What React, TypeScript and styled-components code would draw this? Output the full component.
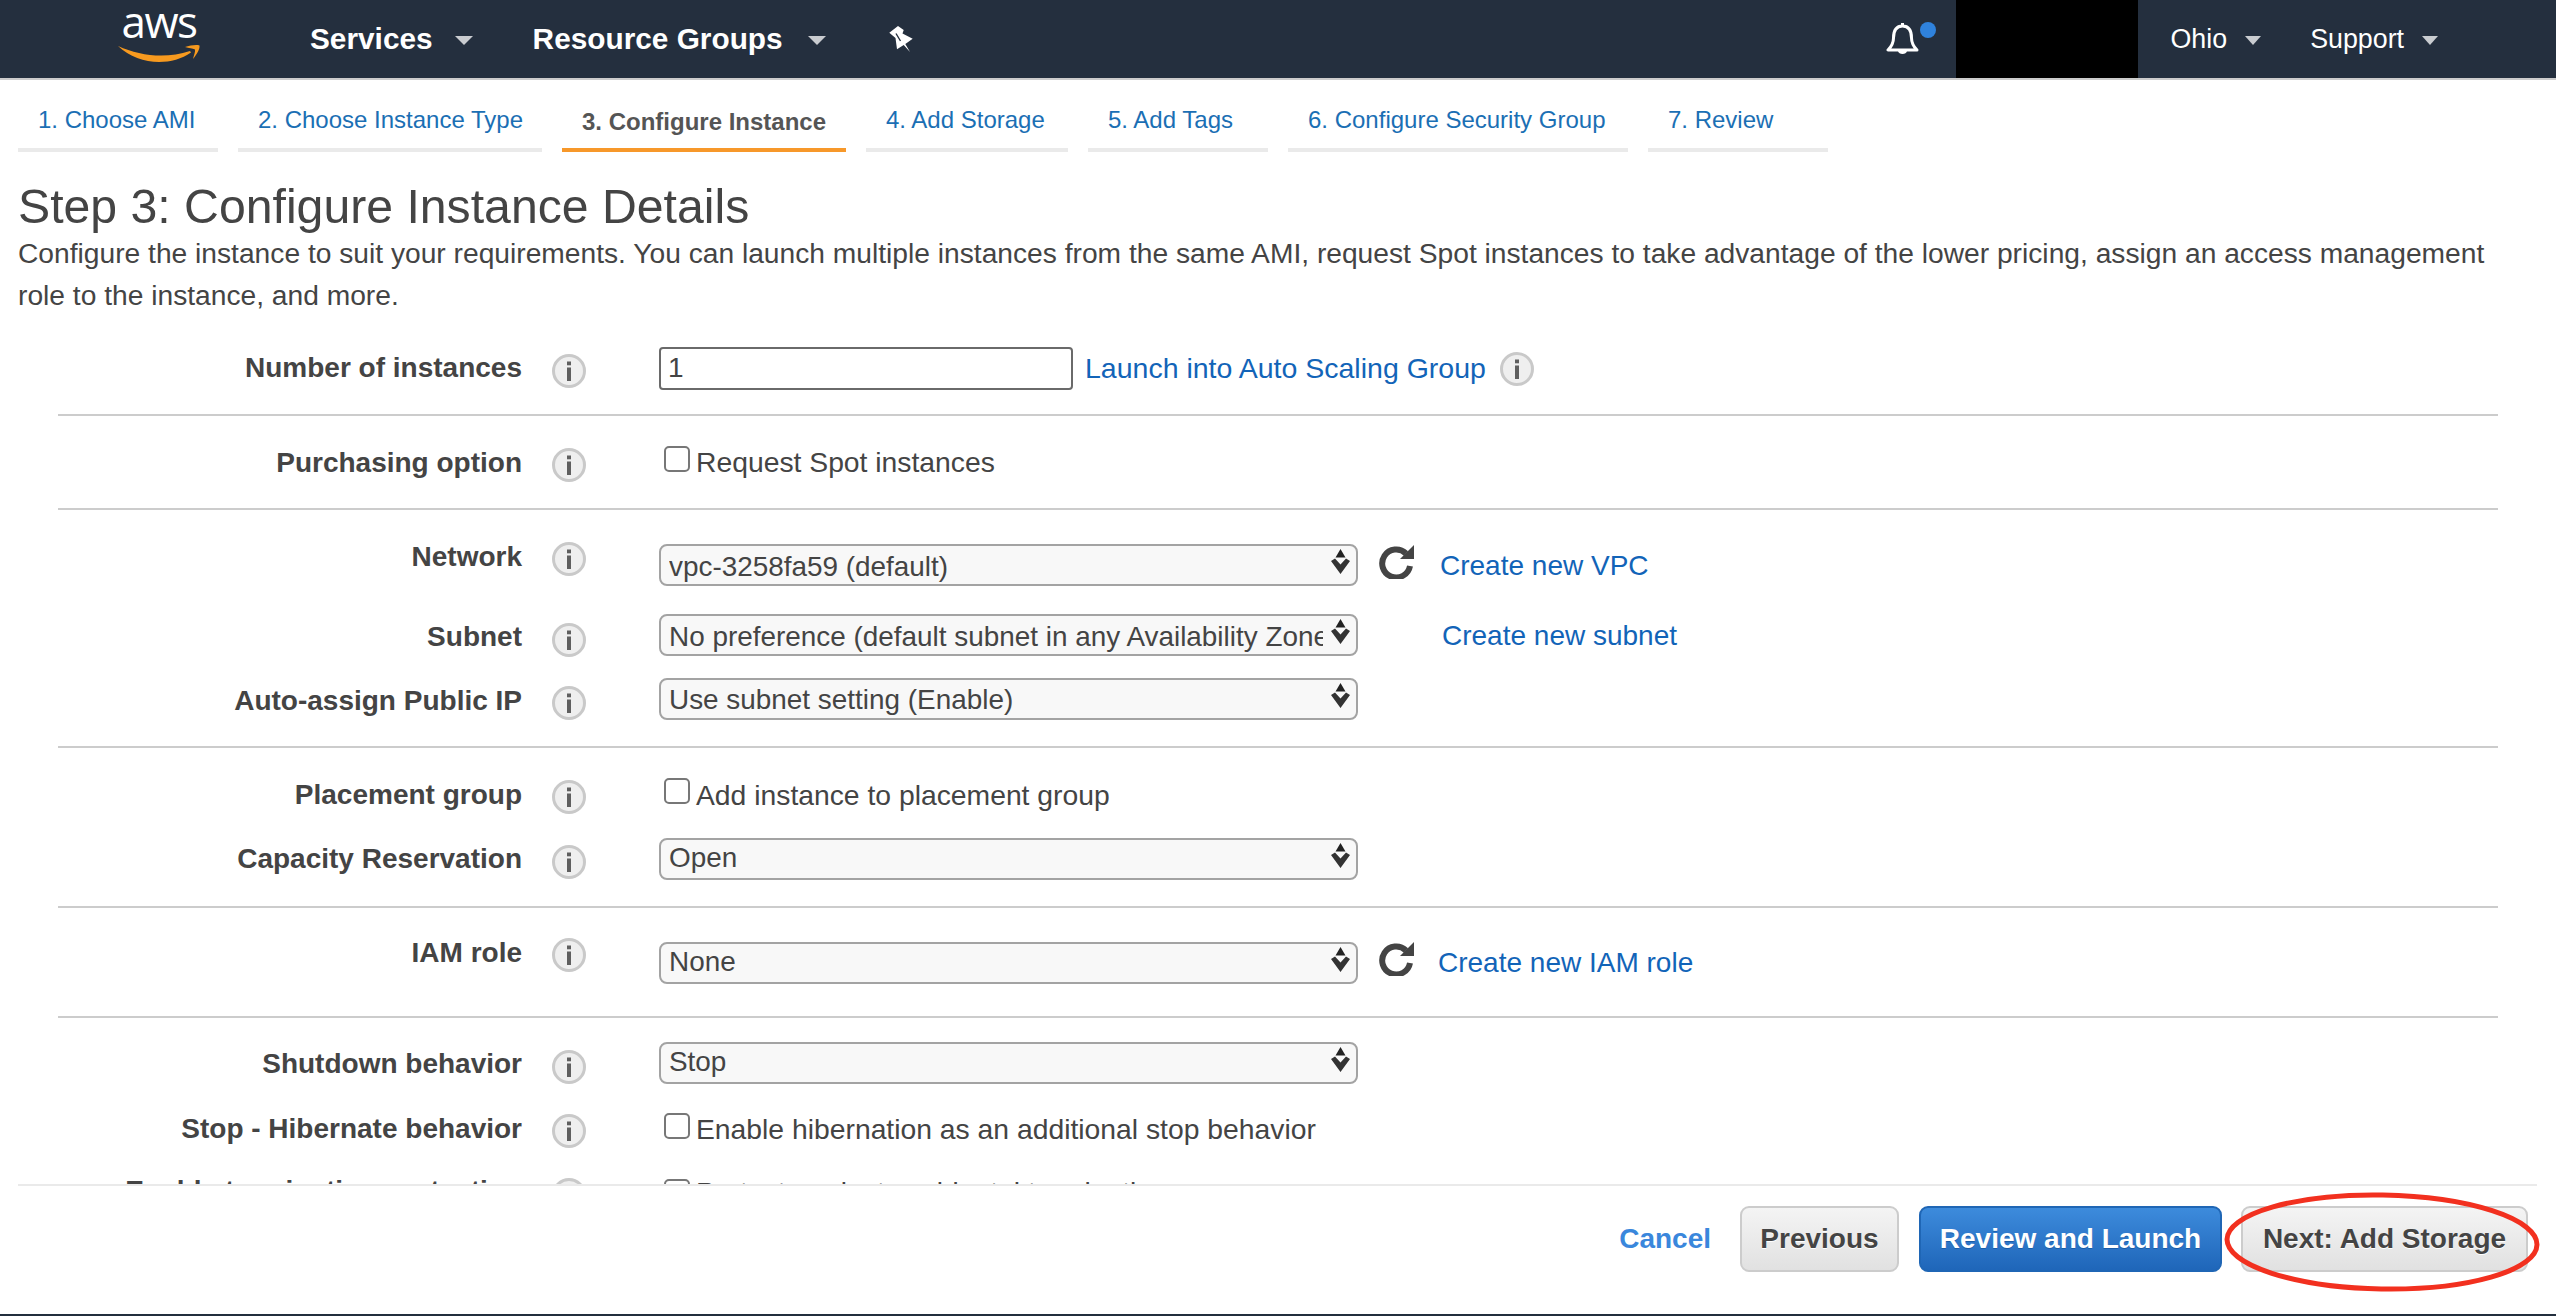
import React from "react";
import styled, { createGlobalStyle } from "styled-components";

const GlobalStyle = createGlobalStyle`
  html, body {
    margin: 0;
    padding: 0;
    background: #fff;
    font-family: "Liberation Sans", Arial, sans-serif;
    color: #444;
  }
  * { box-sizing: border-box; }
`;

const Page = styled.div`
  width: 2556px;
  height: 1316px;
  display: flex;
  flex-direction: column;
  overflow: hidden;
  border-bottom: 2px solid #232f3e;
`;

// top bar
const Nav = styled.header`
  flex: none;
  height: 80px;
  display: flex;
  align-items: flex-start;
  background: #242f3e;
  border-bottom: 2px solid #ccc;
  color: #fff;
`;

const NavGroup = styled.div`
  height: 78px;
  display: flex;
  align-items: center;
`;

const Logo = styled.div`
  width: 82px;
  height: 62px;
  margin: -12px 0 0 118px;
  display: flex;
  flex-direction: column;
  align-items: center;
  justify-content: flex-start;
  gap: 4px;
`;

const LogoText = styled.span`
  font-family: "Open Sans", sans-serif;
  font-size: 44px;
  line-height: 38px;
  letter-spacing: -1.5px;
  color: #fff;
  height: 38px;
`;

const NavMenu = styled.span<{ $gap: number; $left: number }>`
  display: flex;
  align-items: center;
  margin-left: ${(p) => p.$left}px;
  font-size: 29.8px;
  font-weight: 700;
  gap: ${(p) => p.$gap}px;
`;

const NavSmall = styled.span<{ $left: number }>`
  display: flex;
  align-items: center;
  margin-left: ${(p) => p.$left}px;
  font-size: 26.8px;
  gap: 18px;
`;

const Caret = styled.span<{ $w: number }>`
  width: 0;
  height: 0;
  border-left: ${(p) => p.$w}px solid transparent;
  border-right: ${(p) => p.$w}px solid transparent;
  border-top: 9px solid #c9ccd0;
  margin-top: 2px;
`;

const Spacer = styled.div`
  flex: 1;
`;

const RightPad = styled.div`
  width: 118px;
`;

const PinIcon = styled.svg`
  margin-left: 63px;
  width: 24px;
  height: 27px;
`;

const Redacted = styled.div`
  width: 182px;
  height: 78px;
  margin-left: 20px;
  background: #000;
`;

const BellWrap = styled.div`
  width: 50px;
  height: 78px;
  display: flex;
  align-items: flex-start;
  padding-top: 22px;
`;

const BellDot = styled.span`
  width: 16px;
  height: 16px;
  margin-left: 1px;
  border-radius: 50%;
  background: #2f82dc;
`;

// wizard steps
const Tabs = styled.nav`
  flex: none;
  height: 72px;
  display: flex;
  gap: 20px;
  padding-left: 18px;
`;

const Tab = styled.a<{ $active?: boolean; $w: number }>`
  width: ${(p) => p.$w}px;
  display: flex;
  align-items: center;
  padding: ${(p) => (p.$active ? 15 : 11)}px 0 0 20px;
  font-size: 24px;
  font-weight: ${(p) => (p.$active ? 700 : 400)};
  color: ${(p) => (p.$active ? "#555" : "#1b6fb4")};
  border-bottom: 4px solid ${(p) => (p.$active ? "#f7982a" : "#eaeaea")};
  white-space: nowrap;
`;

const Main = styled.main`
  flex: 1;
  min-height: 0;
  overflow: hidden;
`;

const Heading = styled.h1`
  margin: 28px 0 0 18px;
  font-size: 48.2px;
  line-height: 52px;
  font-weight: 400;
  color: #444;
`;

const Intro = styled.p`
  margin: 0 18px;
  font-size: 28.2px;
  line-height: 42px;
  color: #444;
`;

const Section = styled.section<{ $top: number; $bottom: number; $last?: boolean }>`
  margin: 0 58px;
  padding: ${(p) => p.$top}px 0 ${(p) => p.$bottom}px;
  border-bottom: ${(p) => (p.$last ? "none" : "2px solid #ccc")};
`;

const Row = styled.div<{ $mt?: number }>`
  height: 46px;
  margin-top: ${(p) => p.$mt ?? 0}px;
  display: grid;
  grid-template-columns: 464px 137px 1fr;
  align-items: center;
`;

const Label = styled.label<{ $dy?: number }>`
  text-align: right;
  font-size: 28px;
  font-weight: 700;
  color: #444;
  white-space: nowrap;
  margin-top: ${(p) => (p.$dy ?? 0) * 2}px;
`;

const InfoWrap = styled.span<{ $dy?: number; $left?: number }>`
  display: block;
  flex: none;
  width: 34px;
  height: 34px;
  margin-left: ${(p) => p.$left ?? 30}px;
  margin-top: ${(p) => (p.$dy ?? 0) * 2}px;
`;

const Control = styled.div`
  display: flex;
  align-items: center;
`;

const TextInput = styled.input`
  width: 414px;
  height: 43px;
  padding: 0 7px;
  border: 2px solid #6a6a6a;
  border-radius: 4px;
  background: #fff;
  font: 28px "Liberation Sans", Arial, sans-serif;
  color: #444;
`;

const SelectBox = styled.div`
  position: relative;
  width: 699px;
  height: 42px;
`;

const Select = styled.select<{ $shift: number }>`
  appearance: none;
  width: 100%;
  height: 100%;
  padding: ${(p) => Math.max(p.$shift, 0)}px 33px ${(p) => Math.max(-p.$shift, 0)}px 8px;
  border: 2px solid #a3a3a3;
  border-radius: 8px;
  background: #f8f8f8;
  font: 27.9px "Liberation Sans", Arial, sans-serif;
  color: #444;
`;

const SelectArrow = styled.svg`
  position: absolute;
  right: 8px;
  top: 5px;
  width: 19px;
  height: 25px;
`;

const Check = styled.input`
  appearance: none;
  flex: none;
  width: 26px;
  height: 26px;
  margin: 0 6px 0 5px;
  border: 2px solid #777;
  border-radius: 5px;
  background: #fff;
  transform: translateY(-4px);
`;

const CheckText = styled.span<{ $dy?: number }>`
  font-size: 28.3px;
  color: #444;
  white-space: nowrap;
  margin-top: ${(p) => ((p.$dy ?? 0) - 0.5) * 2}px;
`;

const InlineLink = styled.a<{ $left: number; $dy?: number; $size?: number }>`
  margin-left: ${(p) => p.$left}px;
  margin-top: ${(p) => (p.$dy ?? 0) * 2}px;
  font-size: ${(p) => p.$size ?? 28}px;
  color: #1264b8;
  white-space: nowrap;
`;

const RefreshSvg = styled.svg<{ $left: number; $dy: number }>`
  flex: none;
  width: 35px;
  height: 35px;
  margin-left: ${(p) => p.$left}px;
  margin-top: ${(p) => p.$dy * 2}px;
`;

// bottom action bar
const Footer = styled.footer`
  position: relative;
  flex: none;
  height: 130px;
  margin: 0 19px 0 18px;
  padding: 20px 9px 0 0;
  display: flex;
  justify-content: flex-end;
  align-items: flex-start;
  border-top: 2px solid #eaeaea;
`;

const Cancel = styled.a`
  height: 66px;
  margin-right: 29px;
  display: flex;
  align-items: center;
  font-size: 28px;
  font-weight: 700;
  color: #3a87dc;
`;

const Button = styled.button<{ $primary?: boolean; $w: number; $mr?: number }>`
  width: ${(p) => p.$w}px;
  height: 66px;
  margin-right: ${(p) => p.$mr ?? 0}px;
  border: 2px solid ${(p) => (p.$primary ? "#1f66b5" : "#ccc")};
  border-radius: 9px;
  background: ${(p) =>
    p.$primary
      ? "linear-gradient(#3d8bdc, #1f66b9)"
      : "linear-gradient(#f4f4f4, #e1e1e1)"};
  font: 700 28px "Liberation Sans", Arial, sans-serif;
  color: ${(p) => (p.$primary ? "#fff" : "#444")};
  text-shadow: ${(p) => (p.$primary ? "0 1px 0 #1a5ca8" : "0 1px 0 #fff")};
  white-space: nowrap;
`;

const Highlight = styled.svg`
  position: absolute;
  right: -5px;
  top: 5px;
  width: 320px;
  height: 102px;
  pointer-events: none;
`;

const steps = [
  { text: "1. Choose AMI", w: 200 },
  { text: "2. Choose Instance Type", w: 304 },
  { text: "3. Configure Instance", w: 284, active: true },
  { text: "4. Add Storage", w: 202 },
  { text: "5. Add Tags", w: 180 },
  { text: "6. Configure Security Group", w: 340 },
  { text: "7. Review", w: 180 },
];

const Info = ({ dy, left }: { dy?: number; left?: number }) => (
  <InfoWrap $dy={dy} $left={left}>
    <svg viewBox="0 0 34 34" width="34" height="34">
      <circle cx="17" cy="17" r="15.5" fill="#efefef" stroke="#c9c9c9" strokeWidth="3" />
      <rect x="15" y="13.5" width="4" height="13.5" fill="#5f5f5f" />
      <rect x="15" y="7.5" width="4" height="3.8" fill="#5f5f5f" />
    </svg>
  </InfoWrap>
);

const Refresh = ({ left, dy }: { left: number; dy: number }) => (
  <RefreshSvg viewBox="0 0 35 35" $left={left} $dy={dy}>
    <path d="M27 9.5 A14 14 0 1 0 31 22" fill="none" stroke="#444" strokeWidth="6" />
    <path d="M35 1 V15 H21 Z" fill="#444" />
  </RefreshSvg>
);

const Dropdown = ({ value, shift = 0 }: { value: string; shift?: number }) => (
  <SelectBox>
    <Select defaultValue={value} $shift={shift}>
      <option>{value}</option>
    </Select>
    <SelectArrow viewBox="0 0 19 25">
      <path d="M9.5 0 L14.5 8.5 H4.5 Z" fill="#222" />
      <path d="M0 12 L4 9.5 L9.5 15.5 L15 9.5 L19 12 L9.5 25 Z" fill="#333" />
    </SelectArrow>
  </SelectBox>
);

const App: React.FC = () => {
  return (
    <Page>
      <GlobalStyle />
      <Nav>
        <NavGroup>
          <Logo>
            <LogoText>aws</LogoText>
            <svg width="82" height="20" viewBox="0 0 82 20">
              <path d="M0 2 C22 12 48 15 72 7 L73 8.5 C52 23 20 21 0 2 Z" fill="#f79a1f" />
              <path d="M67 3 C72 1.5 78 0.5 81.5 1.5 C82 5 79 10 75 15 C76 11 77.5 7.5 77 5.5 C74.5 4.5 71 4 67 3 Z" fill="#f79a1f" />
            </svg>
          </Logo>
          <NavMenu $left={110} $gap={22}>
            Services <Caret $w={9} />
          </NavMenu>
          <NavMenu $left={60} $gap={25}>
            Resource Groups <Caret $w={9} />
          </NavMenu>
          <PinIcon viewBox="0 0 24 27">
            <path d="M0.3 6.7 L9 0 L14.7 4 L13.5 7.5 L23.7 12.7 L16.3 18 L21 26 L14.7 19 L8 23.3 L6.5 12 Z" fill="#fff" />
            <path d="M7 7.5 L11.5 15" stroke="#242f3e" strokeWidth="1.4" />
          </PinIcon>
        </NavGroup>
        <Spacer />
        <NavGroup>
          <BellWrap>
            <svg width="33" height="34" viewBox="0 0 33 34">
              <path d="M16.5 1 V4 M16.5 4 C9 4 7.5 10 7.5 16 C7.5 22 5 25 2 28 H31 C28 25 25.5 22 25.5 16 C25.5 10 24 4 16.5 4 Z" fill="none" stroke="#fff" strokeWidth="3" strokeLinejoin="round" />
              <path d="M12 29 C12.5 33 20.5 33 21 29 Z" fill="#fff" />
            </svg>
            <BellDot />
          </BellWrap>
          <Redacted />
          <NavSmall $left={33}>
            Ohio <Caret $w={8} />
          </NavSmall>
          <NavSmall $left={49}>
            Support <Caret $w={8} />
          </NavSmall>
          <RightPad />
        </NavGroup>
      </Nav>

      <Tabs>
        {steps.map((s) => (
          <Tab key={s.text} $active={s.active} $w={s.w}>
            {s.text}
          </Tab>
        ))}
      </Tabs>

      <Main>
        <Heading>Step 3: Configure Instance Details</Heading>
        <Intro>
          Configure the instance to suit your requirements. You can launch multiple instances from the same AMI, request Spot instances to take advantage of the lower pricing, assign an access management role to the instance, and more.
        </Intro>

        <Section $top={29} $bottom={23}>
          <Row>
            <Label>Number of instances</Label>
            <Info dy={3} />
            <Control>
              <TextInput readOnly value="1" />
              <InlineLink $left={12} $size={28.5}>Launch into Auto Scaling Group</InlineLink>
              <Info dy={1} left={14} />
            </Control>
          </Row>
        </Section>

        <Section $top={24} $bottom={22}>
          <Row>
            <Label>Purchasing option</Label>
            <Info dy={2} />
            <Control>
              <Check type="checkbox" />
              <CheckText>Request Spot instances</CheckText>
            </Control>
          </Row>
        </Section>

        <Section $top={32} $bottom={24}>
          <Row>
            <Label $dy={-8}>Network</Label>
            <Info dy={-6} />
            <Control>
              <Dropdown value="vpc-3258fa59 (default)" shift={2} />
              <Refresh left={21} dy={-4} />
              <InlineLink $left={26} $dy={1}>Create new VPC</InlineLink>
            </Control>
          </Row>
          <Row $mt={24}>
            <Label $dy={2}>Subnet</Label>
            <Info dy={5} />
            <Control>
              <Dropdown value="No preference (default subnet in any Availability Zone)" shift={2} />
              <InlineLink $left={84} $dy={1}>Create new subnet</InlineLink>
            </Control>
          </Row>
          <Row $mt={18}>
            <Label $dy={2}>Auto-assign Public IP</Label>
            <Info dy={4} />
            <Control>
              <Dropdown value="Use subnet setting (Enable)" />
            </Control>
          </Row>
        </Section>

        <Section $top={24} $bottom={24}>
          <Row>
            <Label>Placement group</Label>
            <Info dy={2} />
            <Control>
              <Check type="checkbox" />
              <CheckText $dy={1}>Add instance to placement group</CheckText>
            </Control>
          </Row>
          <Row $mt={18}>
            <Label>Capacity Reservation</Label>
            <Info dy={3} />
            <Control>
              <Dropdown value="Open" shift={-3} />
            </Control>
          </Row>
        </Section>

        <Section $top={32} $bottom={30}>
          <Row>
            <Label $dy={-10}>IAM role</Label>
            <Info dy={-8} />
            <Control>
              <Dropdown value="None" shift={-3} />
              <Refresh left={21} dy={-5} />
              <InlineLink $left={24}>Create new IAM role</InlineLink>
            </Control>
          </Row>
        </Section>

        <Section $top={22} $bottom={0} $last>
          <Row>
            <Label $dy={1}>Shutdown behavior</Label>
            <Info dy={4} />
            <Control>
              <Dropdown value="Stop" shift={-3} />
            </Control>
          </Row>
          <Row $mt={21}>
            <Label $dy={-1}>Stop - Hibernate behavior</Label>
            <Info dy={1} />
            <Control>
              <Check type="checkbox" />
              <CheckText>Enable hibernation as an additional stop behavior</CheckText>
            </Control>
          </Row>
          <Row $mt={20}>
            <Label $dy={-5}>Enable termination protection</Label>
            <Info dy={-1} />
            <Control>
              <Check type="checkbox" />
              <CheckText $dy={-3}>Protect against accidental termination</CheckText>
            </Control>
          </Row>
        </Section>
      </Main>

      <Footer>
        <Cancel>Cancel</Cancel>
        <Button $w={159} $mr={20}>Previous</Button>
        <Button $primary $w={303} $mr={19}>Review and Launch</Button>
        <Button $w={287}>Next: Add Storage</Button>
        <Highlight viewBox="0 0 320 102">
          <ellipse cx="160" cy="51" rx="155" ry="47" fill="none" stroke="#f2301f" strokeWidth="5" transform="rotate(1 160 51)" />
        </Highlight>
      </Footer>
    </Page>
  );
};

export default App;
